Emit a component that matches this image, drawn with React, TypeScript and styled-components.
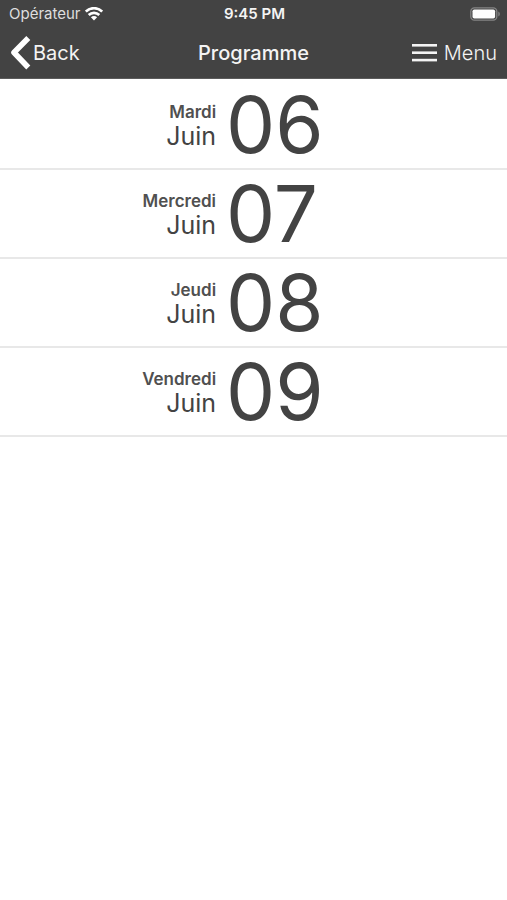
import React from "react";
import styled, { createGlobalStyle } from "styled-components";

const GlobalStyle = createGlobalStyle`
  * { box-sizing: border-box; }
  body {
    margin: 0;
    background: #fff;
    color: #434343;
    font-family: Inter, Roboto, "Liberation Sans", sans-serif;
  }
  button { font: inherit; color: inherit; background: none; border: 0; padding: 0; cursor: pointer; }
`;

const Header = styled.header`
  background: #434343;
  color: #f4f4f4;
  border-bottom: 1px solid #5c5c5c;
`;

const StatusBar = styled.div`
  display: grid;
  grid-template-columns: 1fr auto 1fr;
  align-items: center;
  height: 27px;
  padding: 0 7px 0 9px;
  font-size: 15px;
  line-height: 16px;
`;

const Carrier = styled.span`
  display: flex;
  align-items: center;
  gap: 4px;
  color: #dedede;
`;

const Clock = styled.time`
  font-weight: 600;
`;

const Battery = styled.svg`
  justify-self: end;
`;

const NavBar = styled.nav`
  display: grid;
  grid-template-columns: 1fr auto 1fr;
  align-items: center;
  height: 51px;
  padding: 0 10px;
  font-size: 20px;
  line-height: 24px;
`;

const NavButton = styled.button<{ $side: "start" | "end"; $gap: number }>`
  display: flex;
  align-items: center;
  justify-self: ${(p) => p.$side};
  gap: ${(p) => p.$gap}px;
  font-weight: ${(p) => (p.$side === "end" ? 300 : 400)};
`;

const Title = styled.h1`
  margin: 0;
  font-size: 20px;
  line-height: 24px;
  font-weight: 500;
`;

const DayList = styled.ul`
  margin: 0;
  padding: 2px 0 0;
  list-style: none;
`;

const DayItem = styled.li`
  border-bottom: 2px solid #e8e8e8;
`;

const DayButton = styled.button`
  display: grid;
  grid-template-columns: 10fr 13fr;
  align-items: center;
  column-gap: 10px;
  width: 100%;
  height: 87px;
`;

const DayLabel = styled.span`
  display: flex;
  flex-direction: column;
  text-align: right;
`;

const Weekday = styled.span`
  font-size: 17px;
  line-height: 22px;
  font-weight: 600;
  color: #505050;
`;

const Month = styled.span`
  font-size: 25px;
  line-height: 26px;
  font-weight: 400;
`;

const DayNumber = styled.span`
  text-align: left;
  font-size: 78px;
  line-height: 80px;
  font-weight: 400;
`;

const days = [
  { weekday: "Mardi", month: "Juin", number: "06" },
  { weekday: "Mercredi", month: "Juin", number: "07" },
  { weekday: "Jeudi", month: "Juin", number: "08" },
  { weekday: "Vendredi", month: "Juin", number: "09" },
];

const WifiIcon = () => (
  <svg width="18" height="14" viewBox="0 0 18 14" fill="none" stroke="#fff" strokeWidth="2.6" aria-hidden="true">
    <path d="M.8 4.6C5.4 0 12.6 0 17.2 4.6" />
    <path d="M3.7 8c3-2.9 7.6-2.9 10.6 0" />
    <path d="M9 13.5 5.9 10.3c1.8-1.6 4.4-1.6 6.2 0z" fill="#fff" stroke="none" />
  </svg>
);

const BatteryIcon = () => (
  <Battery width="30" height="14" viewBox="0 0 30 14" role="img" aria-label="Battery full">
    <rect x=".8" y=".8" width="26" height="12.4" rx="3.6" fill="#434343" stroke="#858585" strokeWidth="1.3" />
    <rect x="2.5" y="2.5" width="22.6" height="9" rx="1.8" fill="#fff" />
    <path d="M28.3 4.6c2 .8 2 4 0 4.8z" fill="#858585" />
  </Battery>
);

const ChevronIcon = () => (
  <svg width="21" height="36" viewBox="0 0 21 36" fill="none" stroke="#fff" strokeWidth="5.6" strokeLinejoin="round" aria-hidden="true">
    <path d="M18.3 3 4 17.5l14.3 15" />
  </svg>
);

const MenuIcon = () => (
  <svg width="26" height="20" viewBox="0 0 26 20" fill="#f4f4f4" aria-hidden="true">
    <rect x="1" y="1" width="25" height="2.6" />
    <rect x="1" y="8.4" width="25" height="2.6" />
    <rect x="1" y="15.8" width="25" height="2.6" />
  </svg>
);

export default function App() {
  return (
    <>
      <GlobalStyle />
      <Header>
        <StatusBar>
          <Carrier>
            Opérateur
            <WifiIcon />
          </Carrier>
          <Clock>9:45 PM</Clock>
          <BatteryIcon />
        </StatusBar>
        <NavBar>
          <NavButton type="button" $side="start" $gap={2}>
            <ChevronIcon />
            Back
          </NavButton>
          <Title>Programme</Title>
          <NavButton type="button" $side="end" $gap={7}>
            <MenuIcon />
            Menu
          </NavButton>
        </NavBar>
      </Header>
      <main>
        <DayList>
          {days.map((day) => (
            <DayItem key={day.number}>
              <DayButton type="button">
                <DayLabel>
                  <Weekday>{day.weekday}</Weekday>
                  <Month>{day.month}</Month>
                </DayLabel>
                <DayNumber>{day.number}</DayNumber>
              </DayButton>
            </DayItem>
          ))}
        </DayList>
      </main>
    </>
  );
}
